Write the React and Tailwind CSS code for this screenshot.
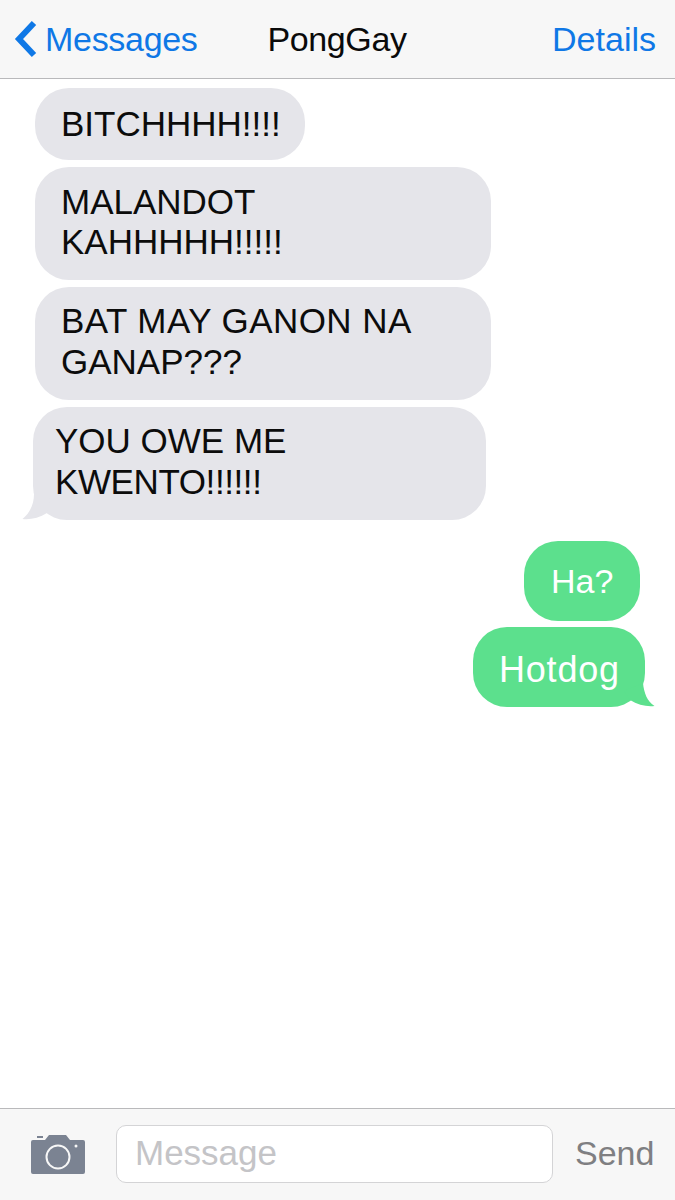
const sans = "font-['Liberation_Sans',Arial,sans-serif]";

function Tail({ side, color }) {
  if (side === "left") {
    return (
      <svg className="absolute left-[-12px] bottom-0" width="40" height="26" viewBox="0 0 40 26">
        <path d="M13 0 C13 10 9 19 1.5 25 C9 26 18 24 26 19 L30 5 Z" fill={color} />
      </svg>
    );
  }
  return (
    <svg className="absolute right-[-10px] bottom-0" width="36" height="26" viewBox="0 0 36 26">
      <path d="M24 2 C25 12 28 20 35.5 25 C28 26 19 24 11 19 L5 10 Z" fill={color} />
    </svg>
  );
}

function Gray({ children, className, tail }) {
  return (
    <div className={`relative bg-[#e5e5ea] rounded-[34px] text-[35px] leading-10 text-[#0c0c0c] ${className}`}>
      {tail && <Tail side="left" color="#e5e5ea" />}
      <div className="relative">{children}</div>
    </div>
  );
}

function Green({ children, className, tail }) {
  return (
    <div className={`relative bg-[#5ce08d] rounded-[34px] h-20 flex items-center text-white ${className}`}>
      {tail && <Tail side="right" color="#5ce08d" />}
      <div className="relative">{children}</div>
    </div>
  );
}

export default function App() {
  return (
    <div className={`w-[675px] h-[1200px] flex flex-col bg-white overflow-hidden ${sans}`}>
      <div className="h-[79px] shrink-0 flex items-center bg-[#f7f7f7] border-b border-[#b9b9bb] text-[34px]">
        <svg className="ml-[14px]" width="24" height="38" viewBox="0 0 24 38">
          <path d="M20 3 L5 19 L20 35" fill="none" stroke="#0f78e6" strokeWidth="6" />
        </svg>
        <span className="ml-[7px] text-[#0f78e6] tracking-[-0.3px]">Messages</span>
        <span className="ml-[70px] text-[#0a0a0a] tracking-[-0.4px]">PongGay</span>
        <span className="ml-auto mr-[19px] text-[#0f78e6]">Details</span>
      </div>

      <div className="flex-1 flex flex-col pt-[9px]">
        <div className="flex flex-col gap-[7px]">
          <Gray className="ml-[35px] w-[270px] h-[72px] pt-4 pl-[26px]">BITCHHHH!!!!</Gray>
          <Gray className="ml-[35px] w-[456px] h-[113px] pt-[15px] pl-[26px]">MALANDOT<br />KAHHHHH!!!!!</Gray>
          <Gray className="ml-[35px] w-[456px] h-[113px] pt-[14px] pl-[26px]">
            <span className="tracking-[0.45px]">BAT MAY GANON NA</span>
            <br />
            <span className="relative top-px">GANAP???</span>
          </Gray>
          <Gray tail className="ml-[33px] w-[453px] h-[113px] pt-[14px] pl-[22px]">
            YOU OWE ME
            <br />
            <span className="relative top-px tracking-[-0.4px]">KWENTO!!!!!!</span>
          </Gray>
        </div>
        <div className="flex flex-col items-end gap-[6px] mt-[21px]">
          <Green className="mr-[35px] w-[116px] pl-[27px] text-[34px]">Ha?</Green>
          <Green tail className="mr-[30px] w-[172px] pl-[26px] pt-[6px] text-[36px] tracking-[0.8px]">Hotdog</Green>
        </div>
      </div>

      <div className="h-[92px] shrink-0 flex items-center bg-[#f7f7f7] border-t border-[#b9b9bb] pb-[2px]">
        <svg className="ml-[31px] shrink-0" width="54" height="40" viewBox="0 0 54 40">
          <path d="M2 6 H14 L18 1 H35 L39 6 H52 Q54 6 54 8 V38 Q54 40 52 40 H2 Q0 40 0 38 V8 Q0 6 2 6 Z" fill="#7b8392" />
          <rect x="6" y="2" width="6" height="2" fill="#7b8392" />
          <circle cx="27" cy="23" r="11.5" fill="none" stroke="#f7f7f7" strokeWidth="2" />
          <circle cx="45" cy="12" r="1.5" fill="#f7f7f7" />
        </svg>
        <div className="ml-[31px] w-[437px] h-[58px] shrink-0 flex items-center bg-white border border-[#d4d4d6] rounded-[10px] pl-[18px] text-[35px] text-[#c4c4c7]">
          Message
        </div>
        <span className="ml-[22px] text-[34px] text-[#7f7f82]">Send</span>
      </div>
    </div>
  );
}
